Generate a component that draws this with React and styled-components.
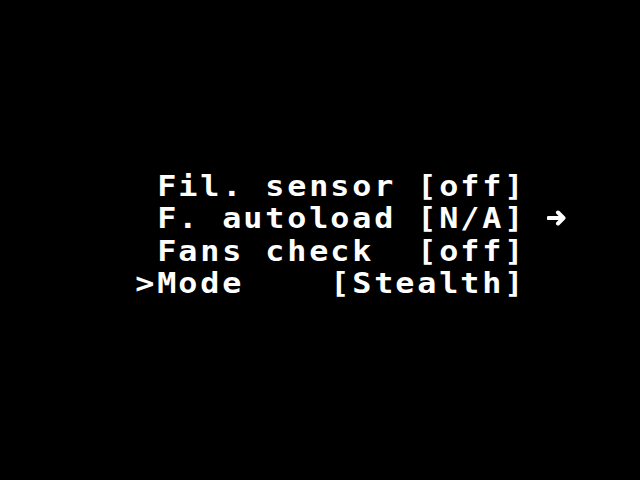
import React from "react";
import styled, { createGlobalStyle } from "styled-components";

const GlobalStyle = createGlobalStyle`
    html, body {
        margin: 0;
        padding: 0;
        background: #000;
    }
    body {
        width: 640px;
        height: 480px;
        overflow: hidden;
    }
`

const Page = styled.div`
    width: 640px;
    height: 480px;
    box-sizing: border-box;
    background: #000;
    padding: 171px 0 0 134px;
`
const Screen = styled.div`
    display: flex;
    flex-direction: column;
`
const Line = styled.div`
    display: grid;
    grid-template-columns: repeat(20, 21.7px);
    height: 32.3px;
`
// one LCD character cell, glyph stretched a bit wider like the 5x8 dots
const Cell = styled.span`
    display: flex;
    justify-content: center;
    align-items: flex-start;
    height: 32.3px;
    line-height: 32.3px;
    font-family: "DejaVu Sans Mono", "Liberation Mono", monospace;
    font-weight: bold;
    font-size: 27.6px;
    color: #fff;
    white-space: pre;
    transform: scaleX(1.15);
`
const ArrowCell = styled.span`
    display: flex;
    justify-content: center;
    align-items: center;
    height: 32.3px;
    padding-bottom: 2px;
    box-sizing: border-box;
`

const Arrow = () => (
    <svg width="20" height="16" viewBox="0 0 20 16">
        <path d="M1.5 8 H16.5 M11 2.5 L16.5 8 L11 13.5" stroke="#fff" strokeWidth="4" fill="none" strokeLinecap="round" strokeLinejoin="round" />
    </svg>
)

const lines = [
    " Fil. sensor [off]",
    " F. autoload [N/A] \u2192",
    " Fans check  [off]",
    ">Mode    [Stealth]",
]

const LcdLine = ({ text }) => {
    const chars = text.padEnd(20, " ").slice(0, 20).split("")
    return (
        <Line>
            {chars.map((c, i) =>
                c === "\u2192"
                    ? <ArrowCell key={i}><Arrow /></ArrowCell>
                    : <Cell key={i}>{c}</Cell>
            )}
        </Line>
    )
}

const App = () => {
    return (
        <>
            <GlobalStyle />
            <Page>
                <Screen>
                    {lines.map((l, i) => <LcdLine key={i} text={l} />)}
                </Screen>
            </Page>
        </>
    )
}
export default App;
